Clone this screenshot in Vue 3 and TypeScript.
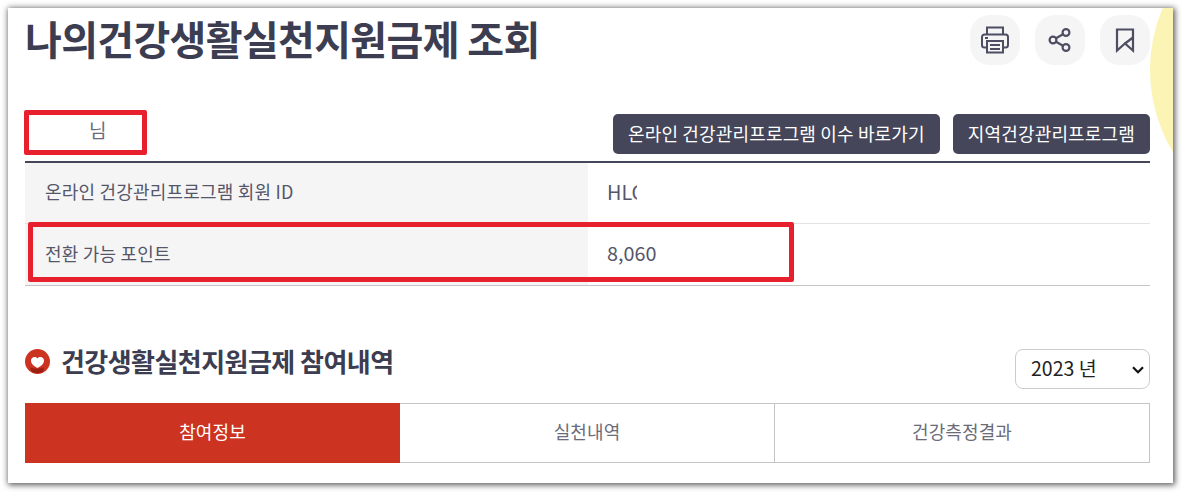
<script setup lang="ts">
import { ref } from 'vue';

const year = ref('2023');
const years = ['2023', '2022', '2021'];
const tabs = ['참여정보', '실천내역', '건강측정결과'];
const activeTab = ref(0);
</script>

<template>
  <div class="screen">
    <div class="frame">
      <div class="circle"></div>
      <div class="page">
        <header class="title-row">
          <h1>나의건강생활실천지원금제 조회</h1>
          <div class="tools">
            <button class="tool" aria-label="인쇄">
              <svg width="30" height="30" viewBox="0 0 30 30" fill="none" stroke="#4d4e62" stroke-width="2">
                <path d="M7 9.500V2.500h16v7" />
                <path d="M7 22.500H4.500A2.500 2.500 0 0 1 2 20v-8a2.500 2.500 0 0 1 2.500-2.500h21A2.500 2.500 0 0 1 28 12v8a2.500 2.500 0 0 1-2.500 2.500H23" />
                <path d="M7 16h16v11.500H7z" />
                <path d="M10 20h10M10 24h10" stroke-width="1.800" />
                <path d="M5 13h3" />
              </svg>
            </button>
            <button class="tool" aria-label="공유">
              <svg width="26" height="26" viewBox="0 0 26 26" fill="none" stroke="#4d4e62" stroke-width="2.2">
                <circle cx="19" cy="5.500" r="3.400" />
                <circle cx="6" cy="13" r="3.400" />
                <circle cx="19" cy="20.500" r="3.400" />
                <path d="M9 11.300l7-4M9 14.700l7 4" />
              </svg>
            </button>
            <button class="tool" aria-label="북마크">
              <svg width="22" height="26" viewBox="0 0 22 26" fill="none" stroke="#4d4e62" stroke-width="2.2">
                <path d="M3 2.500h16v21l-8-7-8 7z" />
                <path d="M19 10.500l-8 6" />
              </svg>
            </button>
          </div>
        </header>

        <div class="user-row">
          <span class="user-name">님</span>
          <div class="links">
            <a class="link-btn">온라인 건강관리프로그램 이수 바로가기</a>
            <a class="link-btn">지역건강관리프로그램</a>
          </div>
        </div>

        <div class="info-table">
          <div class="info-row">
            <div class="info-label">온라인 건강관리프로그램 회원 ID</div>
            <div class="info-value"><span class="masked">HLC</span></div>
          </div>
          <div class="info-row">
            <div class="info-label">전환 가능 포인트</div>
            <div class="info-value">8,060</div>
          </div>
        </div>

        <div class="section-head">
          <h2>
            <svg class="heart" width="25" height="25" viewBox="0 0 25 25">
              <circle cx="12.500" cy="12.500" r="12.500" fill="#cc3320" />
              <path d="M5 18.500c4 1.500 10 1.500 14 0l-1 4.500c-4 1.500-8 1.500-11 0z" fill="#9c1f12" />
              <path d="M12.500 19c-3.500-2-6.500-4-6.500-7.500 0-3.600 4.600-4.600 6.500-2 1.900-2.600 6.500-1.600 6.500 2 0 3.500-3 5.500-6.500 7.500z" fill="#fff" />
            </svg>
            <span class="h2-text">건강생활실천지원금제 참여내역</span>
          </h2>
          <div class="select-wrap">
            <select v-model="year" class="year-select">
              <option v-for="y in years" :key="y" :value="y">{{ y }} 년</option>
            </select>
            <svg class="chevron" width="12" height="8" viewBox="0 0 12 8" fill="none" stroke="#111" stroke-width="2.200">
              <path d="M1 1.200l5 5 5-5" />
            </svg>
          </div>
        </div>

        <nav class="tabs">
          <a
            v-for="(tab, i) in tabs"
            :key="tab"
            class="tab"
            :class="{ active: i === activeTab }"
            @click="activeTab = i"
          >{{ tab }}</a>
        </nav>
      </div>

      <!-- 캡처 위에 그려진 빨간 표시 -->
      <div class="mark mark-name"></div>
      <div class="mark mark-point"></div>
    </div>
  </div>
</template>

<style>
html,
body {
  margin: 0;
  background: #fff;
}
</style>

<style scoped>
.screen {
  box-sizing: border-box;
  width: 1182px;
  height: 492px;
  padding: 8px 9px 9px 8px;
  overflow: hidden;
}
.frame {
  position: relative;
  height: 475px;
  background: #fff;
  overflow: hidden;
  box-shadow: 1px 1px 6px 1px rgba(0, 0, 0, 0.65);
  font-family: "Noto Sans CJK KR", "Noto Sans", sans-serif;
  color: #45465a;
}
.circle {
  position: absolute;
  left: 1142px;
  top: -96px;
  width: 316px;
  height: 316px;
  border-radius: 50%;
  background: #fbf4b4;
}
.page {
  position: relative;
  padding: 0 23px 0 17px;
}
.title-row {
  display: flex;
  justify-content: space-between;
  height: 106px;
}
h1 {
  margin: 0;
  font-size: 40px;
  line-height: 60px;
  font-weight: 700;
  letter-spacing: -0.65px;
  color: #3c3d50;
}
.tools {
  display: flex;
  gap: 15px;
  padding-top: 7px;
}
.tool {
  display: flex;
  align-items: center;
  justify-content: center;
  width: 50px;
  height: 50px;
  padding: 0;
  border: 0;
  border-radius: 20px;
  background: #f5f5f6;
}
.user-row {
  display: flex;
  justify-content: space-between;
  align-items: center;
  height: 40px;
}
.user-name {
  padding: 0 0 10px 64px;
  font-size: 19px;
  color: #6b6c7a;
}
.links {
  display: flex;
  gap: 13px;
}
.link-btn {
  display: flex;
  align-items: center;
  box-sizing: border-box;
  height: 40px;
  padding: 0 15px 2px;
  border-radius: 5px;
  background: #45465a;
  color: #fff;
  font-size: 18px;
  font-weight: 400;
  letter-spacing: 0.16px;
}
.info-table {
  margin-top: 7px;
  border-top: 2px solid #45465a;
}
.info-row {
  display: flex;
  box-sizing: border-box;
  height: 61px;
  border-bottom: 1px solid #e3e3e3;
  font-size: 18px;
}
.info-row:last-child {
  height: 62px;
  border-bottom-color: #c4c4c4;
}
.info-label {
  display: flex;
  align-items: center;
  box-sizing: border-box;
  width: 563px;
  padding: 0 0 4px 20px;
  background: #f5f5f5;
  color: #55566a;
  letter-spacing: 0.2px;
}
.info-value {
  display: flex;
  align-items: center;
  padding: 0 0 4px 19px;
  font-size: 19.8px;
  color: #55566a;
}
.masked {
  display: inline-block;
  width: 30px;
  overflow: hidden;
}
.section-head {
  display: flex;
  justify-content: space-between;
  align-items: flex-start;
  margin-top: 63px;
}
h2 {
  display: flex;
  align-items: center;
  gap: 11px;
  margin: 0;
  height: 26px;
  font-size: 26px;
  font-weight: 700;
  letter-spacing: -0.55px;
  color: #3c3d50;
  white-space: nowrap;
}
.h2-text {
  margin-top: -4px;
}
.heart {
  flex: none;
  margin-top: -2px;
}
.select-wrap {
  position: relative;
  width: 135px;
  height: 40px;
}
.year-select {
  appearance: none;
  box-sizing: border-box;
  width: 100%;
  height: 100%;
  padding: 0 0 3px 15px;
  border: 1px solid #ccc;
  border-radius: 8px;
  background-color: #fff;
  font-family: inherit;
  font-size: 19.5px;
  color: #222;
}
.chevron {
  position: absolute;
  right: 6px;
  top: 17px;
  pointer-events: none;
}
.tabs {
  display: grid;
  grid-template-columns: repeat(3, 1fr);
  margin-top: 14px;
}
.tab {
  display: flex;
  align-items: center;
  justify-content: center;
  height: 60px;
  box-sizing: border-box;
  padding-bottom: 4px;
  border: 1px solid #c4c4c4;
  border-left: 0;
  font-size: 18px;
  letter-spacing: 0.1px;
  color: #6b6c7a;
}
.tab.active {
  border: 0;
  background: #cc3320;
  color: #fff;
}
.mark {
  position: absolute;
  box-sizing: border-box;
  border: 5px solid #e8202e;
  border-radius: 2px;
}
.mark-name {
  left: 16px;
  top: 102px;
  width: 123px;
  height: 45px;
}
.mark-point {
  left: 20px;
  top: 214px;
  width: 766px;
  height: 60px;
}
</style>
